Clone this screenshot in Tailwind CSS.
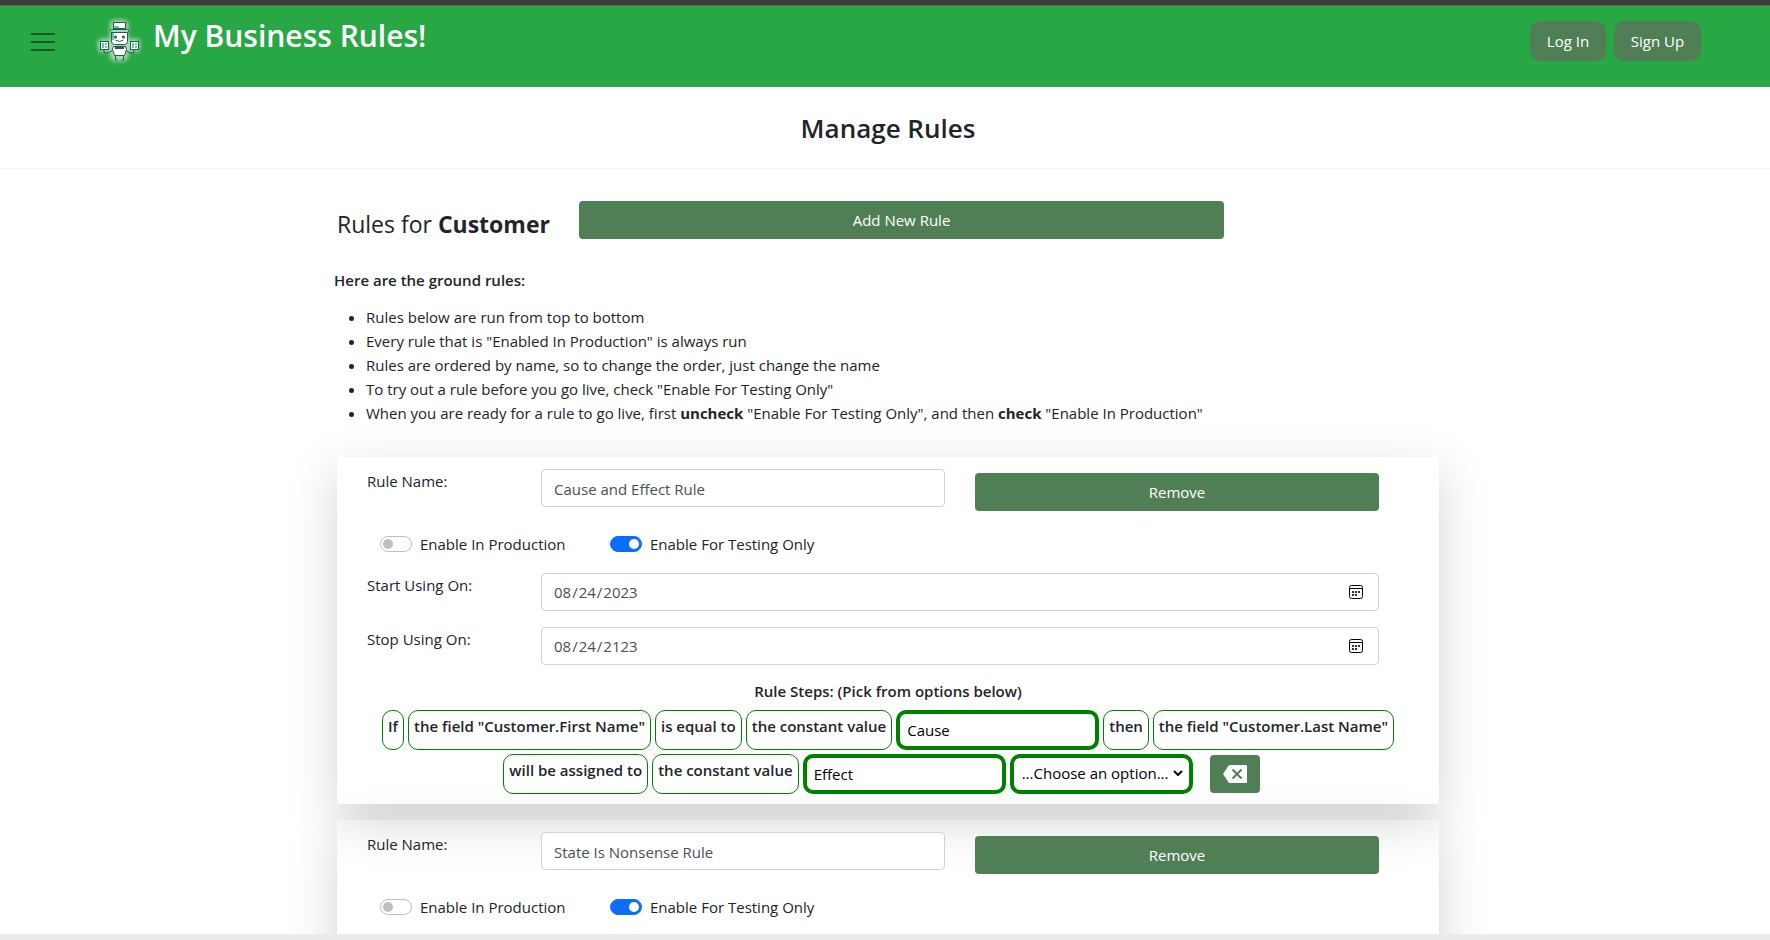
<!DOCTYPE html>
<html lang="en">
<head>
<meta charset="utf-8">
<title>My Business Rules!</title>
<script src="https://cdn.jsdelivr.net/npm/@tailwindcss/browser@4"></script>
</head>
<body class="flex h-screen flex-col overflow-hidden bg-white font-['Open_Sans','Noto_Sans',sans-serif] text-[15px] leading-6 text-[#212529]">
<div class="h-1.5 shrink-0 border-b border-[#5a6a5c] bg-[#3b3b3b]"></div>
<header class="flex h-[81px] shrink-0 items-start bg-[#28a745] pt-[15px] pr-[69px] pl-[31px]">
  <button type="button" aria-label="Menu" class="flex h-[42px] w-6 items-center">
    <svg class="h-6 w-6" viewBox="0 0 24 24" stroke="#1b5a2b" stroke-width="2"><path d="M0 4h24M0 12h24M0 20h24"/></svg>
  </button>
  <svg class="-mt-1 ml-10 h-12 w-12 shrink-0" viewBox="0 0 48 48" aria-hidden="true">
    <defs><filter id="glow" x="-30%" y="-30%" width="160%" height="160%"><feGaussianBlur stdDeviation="2"/></filter></defs>
    <g fill="#fff" opacity=".6" filter="url(#glow)"><rect x="15" y="3" width="18" height="41" rx="5"/><rect x="3" y="22" width="42" height="13" rx="4"/></g>
    <g fill="#fff" stroke="#2c5a4c" stroke-width="1">
      <path d="M20.500 38v5h2M28.500 38v5h-2" fill="none"/>
      <path d="M9 33v3h4l5-3M39 33v3h-4l-5-3" fill="none"/>
      <rect x="18.500" y="5.500" width="12" height="6"/>
      <rect x="15.500" y="12.500" width="18" height="3" rx="1" fill="#8fe0b4"/>
      <path d="M16.500 15.500h16v9q0 3-3 3h-10q-3 0-3-3z"/>
      <path d="M18.500 29.500h12l1 3-2 6h-10l-2-6z"/>
      <rect x="5.500" y="24.500" width="8" height="8"/>
      <rect x="35.500" y="24.500" width="8" height="8"/>
    </g>
    <g fill="#5fcf97"><path d="M19 9h5v2h-5zM17 16h2v7h-2zM7 26h2v5H7zM10 26h2v2h-2zM10 29h2v2h-2zM37 26h2v5h-2zM40 26h2v2h-2zM40 29h2v2h-2z"/></g>
    <g fill="#2c5a4c"><circle cx="20.500" cy="20" r="1.500"/><circle cx="28.500" cy="20" r="1.500"/><path d="M20 30h9v2h-9z"/></g>
    <path d="M20.500 23q4 3 8 0" fill="none" stroke="#2c5a4c"/>
  </svg>
  <h1 class="ml-2.5 text-[30px] leading-[30px] font-semibold text-white">My Business Rules!</h1>
  <nav class="ml-auto flex gap-2 text-white">
    <button type="button" class="h-10 w-[76px] rounded-[10px] bg-[#507f55]">Log In</button>
    <button type="button" class="h-10 w-[87px] rounded-[10px] bg-[#507f55]">Sign Up</button>
  </nav>
</header>
<main class="min-h-0 flex-1 overflow-hidden">
  <div class="flex h-[82px] items-center justify-center border-b border-[#f7f7f7] pl-1.5">
    <h2 class="text-[26px] leading-8 font-semibold">Manage Rules</h2>
  </div>
  <div class="pl-1.5">
    <div class="mx-auto max-w-[1102px] pt-8">
      <div class="flex items-start">
        <h3 class="w-[242px] shrink-0 pt-[7px] text-[23px] leading-8">Rules for <b>Customer</b></h3>
        <button type="button" class="h-[38px] w-[645px] rounded bg-[#507f55] text-white">Add New Rule</button>
      </div>
      <section class="-ml-[3px] pt-7">
        <h4 class="font-semibold">Here are the ground rules:</h4>
        <ul class="list-disc pt-[13px] pl-8">
          <li>Rules below are run from top to bottom</li>
          <li>Every rule that is "Enabled In Production" is always run</li>
          <li>Rules are ordered by name, so to change the order, just change the name</li>
          <li>To try out a rule before you go live, check "Enable For Testing Only"</li>
          <li>When you are ready for a rule to go live, first <b>uncheck</b> "Enable For Testing Only", and then <b>check</b> "Enable In Production"</li>
        </ul>
      </section>
      <section class="mt-8 pt-3 pr-[60px] pb-2.5 pl-[30px] shadow-[0_16px_48px_rgba(0,0,0,0.175)]">
        <div class="flex items-start">
          <label for="name1" class="w-[174px]">Rule Name:</label>
          <div class="grid flex-1 grid-cols-2 items-start gap-[30px]">
            <input id="name1" type="text" value="Cause and Effect Rule" class="h-[38px] w-full rounded border border-[#ced4da] bg-white px-3 pt-0.5 text-[#495057]">
            <button type="button" class="mt-1 h-[38px] rounded bg-[#507f55] text-white">Remove</button>
          </div>
        </div>
        <div class="flex pt-[21px] pl-[13px]">
          <div class="flex w-[230px] items-center gap-2">
            <input id="prod1" type="checkbox" role="switch" class="h-4 w-8 appearance-none rounded-full border border-[#bfbfbf] bg-white p-0.5 before:block before:size-2.5 before:rounded-full before:bg-[#bfbfbf] checked:border-[#0d6efd] checked:bg-[#0d6efd] checked:before:ml-4 checked:before:bg-white">
            <label for="prod1">Enable In Production</label>
          </div>
          <div class="flex items-center gap-2">
            <input id="test1" type="checkbox" role="switch" checked class="h-4 w-8 appearance-none rounded-full border border-[#bfbfbf] bg-white p-0.5 before:block before:size-2.5 before:rounded-full before:bg-[#bfbfbf] checked:border-[#0d6efd] checked:bg-[#0d6efd] checked:before:ml-4 checked:before:bg-white">
            <label for="test1">Enable For Testing Only</label>
          </div>
        </div>
        <div class="flex items-start pt-[17px]">
          <label for="start1" class="w-[174px]">Start Using On:</label>
          <div class="relative flex-1">
            <input id="start1" type="date" value="2023-08-24" class="block h-[38px] w-full rounded border border-[#ced4da] bg-white px-[11px] text-[#495057] [&::-webkit-calendar-picker-indicator]:opacity-0">
            <svg class="pointer-events-none absolute top-3 right-4 h-3.5 w-3.5" viewBox="0 0 14 14" fill="none" stroke="#000" aria-hidden="true"><rect x=".5" y=".5" width="13" height="13" rx="2"/><path d="M1 3.500h12"/><path d="M3 7h2M6 7h2M9 7h2M3 10h2M6 10h2" stroke="#333" stroke-width="2"/></svg>
          </div>
        </div>
        <div class="flex items-start pt-4">
          <label for="stop1" class="w-[174px]">Stop Using On:</label>
          <div class="relative flex-1">
            <input id="stop1" type="date" value="2123-08-24" class="block h-[38px] w-full rounded border border-[#ced4da] bg-white px-[11px] text-[#495057] [&::-webkit-calendar-picker-indicator]:opacity-0">
            <svg class="pointer-events-none absolute top-3 right-4 h-3.5 w-3.5" viewBox="0 0 14 14" fill="none" stroke="#000" aria-hidden="true"><rect x=".5" y=".5" width="13" height="13" rx="2"/><path d="M1 3.500h12"/><path d="M3 7h2M6 7h2M9 7h2M3 10h2M6 10h2" stroke="#333" stroke-width="2"/></svg>
          </div>
        </div>
        <div class="-mr-[30px] pt-3.5">
          <h5 class="text-center font-semibold">Rule Steps: (Pick from options below)</h5>
          <div class="flex flex-wrap justify-center gap-1 pt-[7px] font-semibold">
            <span class="h-10 rounded-[10px] border border-[#008000] px-[5px] pt-[3px]">If</span>
            <span class="h-10 rounded-[10px] border border-[#008000] px-[5px] pt-[3px]">the field "Customer.First Name"</span>
            <span class="h-10 rounded-[10px] border border-[#008000] px-[5px] pt-[3px]">is equal to</span>
            <span class="h-10 rounded-[10px] border border-[#008000] px-[5px] pt-[3px]">the constant value</span>
            <input type="text" aria-label="Compared value" value="Cause" class="h-10 w-[203px] rounded-[10px] border-4 border-[#008000] bg-white px-[7px] font-normal text-black">
            <span class="h-10 rounded-[10px] border border-[#008000] px-[5px] pt-[3px]">then</span>
            <span class="h-10 rounded-[10px] border border-[#008000] px-[5px] pt-[3px]">the field "Customer.Last Name"</span>
            <span class="h-10 rounded-[10px] border border-[#008000] px-[5px] pt-[3px]">will be assigned to</span>
            <span class="h-10 rounded-[10px] border border-[#008000] px-[5px] pt-[3px]">the constant value</span>
            <input type="text" aria-label="Assigned value" value="Effect" class="h-10 w-[203px] rounded-[10px] border-4 border-[#008000] bg-white px-[7px] font-normal text-black">
            <div class="relative">
              <select aria-label="Next step" class="block h-10 w-[183px] appearance-none rounded-[10px] border-4 border-[#008000] bg-white px-2 pb-0.5 font-normal text-black"><option>...Choose an option...</option></select>
              <svg class="pointer-events-none absolute top-4 right-2.5 h-1.5 w-2.5" viewBox="0 0 10 6" fill="none" stroke="#000" stroke-width="2" aria-hidden="true"><path d="M1 1l4 4 4-4"/></svg>
            </div>
            <button type="button" aria-label="Delete last step" class="mx-[13px] mt-px flex h-[38px] w-[50px] items-center justify-center rounded bg-[#507f55]">
              <svg class="h-[18px] w-6" viewBox="0 0 24 18"><path d="M6 0h17q1 0 1 1v16q0 1-1 1H6L0 9z" fill="#fff"/><path d="M9.500 4.500l9 9M18.500 4.500l-9 9" stroke="#507f55" stroke-width="2"/></svg>
            </button>
          </div>
        </div>
      </section>
      <section class="mt-4 min-h-[347px] pt-3 pr-[60px] pb-2.5 pl-[30px] shadow-[0_16px_48px_rgba(0,0,0,0.175)]">
        <div class="flex items-start">
          <label for="name2" class="w-[174px]">Rule Name:</label>
          <div class="grid flex-1 grid-cols-2 items-start gap-[30px]">
            <input id="name2" type="text" value="State Is Nonsense Rule" class="h-[38px] w-full rounded border border-[#ced4da] bg-white px-3 pt-0.5 text-[#495057]">
            <button type="button" class="mt-1 h-[38px] rounded bg-[#507f55] text-white">Remove</button>
          </div>
        </div>
        <div class="flex pt-[21px] pl-[13px]">
          <div class="flex w-[230px] items-center gap-2">
            <input id="prod2" type="checkbox" role="switch" class="h-4 w-8 appearance-none rounded-full border border-[#bfbfbf] bg-white p-0.5 before:block before:size-2.5 before:rounded-full before:bg-[#bfbfbf] checked:border-[#0d6efd] checked:bg-[#0d6efd] checked:before:ml-4 checked:before:bg-white">
            <label for="prod2">Enable In Production</label>
          </div>
          <div class="flex items-center gap-2">
            <input id="test2" type="checkbox" role="switch" checked class="h-4 w-8 appearance-none rounded-full border border-[#bfbfbf] bg-white p-0.5 before:block before:size-2.5 before:rounded-full before:bg-[#bfbfbf] checked:border-[#0d6efd] checked:bg-[#0d6efd] checked:before:ml-4 checked:before:bg-white">
            <label for="test2">Enable For Testing Only</label>
          </div>
        </div>
      </section>
    </div>
  </div>
</main>
<footer class="h-1.5 shrink-0 bg-[#e9ecef]"></footer>
</body>
</html>
